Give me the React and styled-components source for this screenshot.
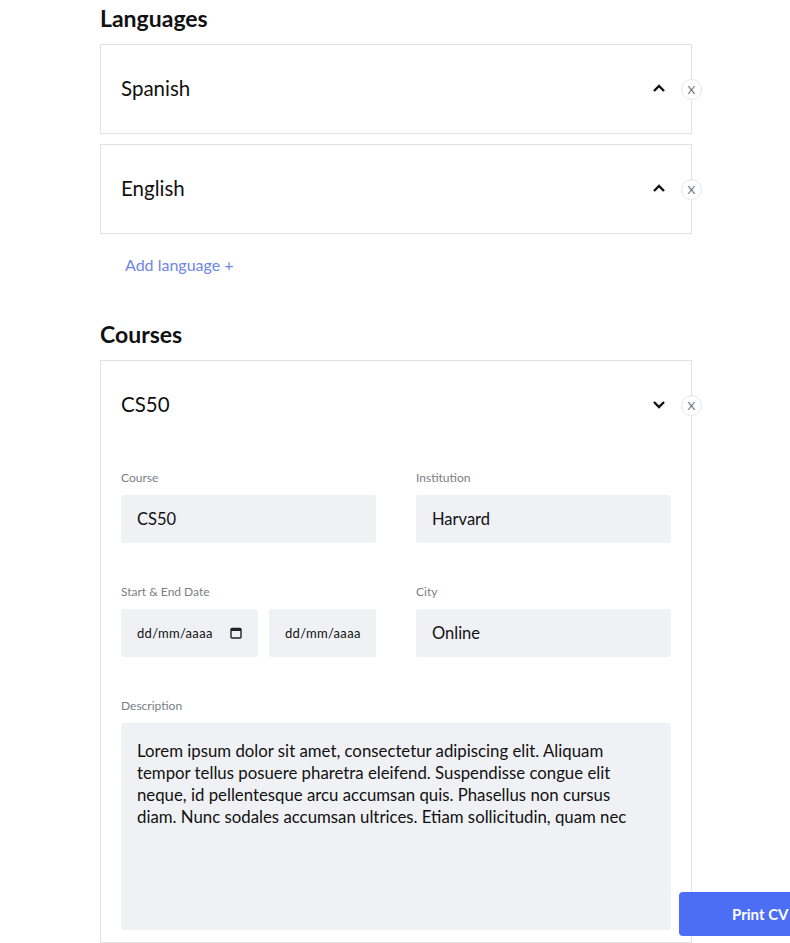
import React from 'react'
import styled, { createGlobalStyle } from 'styled-components'

const GlobalStyle = createGlobalStyle`
  * { box-sizing: border-box; }
  body {
    margin: 0;
    background: #ffffff;
    font-family: Lato, "Open Sans", sans-serif;
    color: #111111;
  }
`

const Page = styled.div`
  width: 592px;
  margin-left: 100px;
  padding-top: 4px;
`

const Section = styled.section`
  margin-bottom: 45px;
`

const Heading = styled.h2`
  margin: 0 0 11px;
  font-size: 23px;
  line-height: 29px;
  font-weight: 700;
`

const CardList = styled.div`
  display: flex;
  flex-direction: column;
  gap: 10px;
`

const Card = styled.div`
  position: relative;
  border: 1px solid #e2e2e2;
  background: #fff;
`

const CardHeader = styled.div`
  height: 88px;
  display: flex;
  align-items: center;
  justify-content: space-between;
  padding: 0 25px 2px 20px;
  font-size: 20.5px;
`

const Chevron = styled.svg`
  width: 14px;
  height: 14px;
`

const RemoveButton = styled.button`
  position: absolute;
  right: -11px;
  top: 34px;
  width: 21px;
  height: 21px;
  border-radius: 50%;
  border: 1px solid #e6e6e6;
  background: #fff;
  color: #6a6f80;
  font-family: Lato, sans-serif;
  font-size: 12px;
  line-height: 1;
  padding: 0;
  display: flex;
  align-items: center;
  justify-content: center;
`

const AddLink = styled.div`
  margin: 21px 0 0 25px;
  color: #6e86e6;
  font-size: 16px;
  line-height: 20px;
`

const Form = styled.div`
  display: grid;
  grid-template-columns: 255px 255px;
  column-gap: 40px;
  row-gap: 41px;
  padding: 21px 20px 12px 20px;
`

const Field = styled.div`
  display: flex;
  flex-direction: column;
  gap: 9px;
  grid-column: ${p => (p.$wide ? '1 / -1' : 'auto')};
  min-width: 0;
`

const Label = styled.label`
  font-size: 12px;
  line-height: 16px;
  color: #7b7e86;
`

const Input = styled.div`
  height: 48px;
  background: #f0f1f5;
  border-radius: 3px;
  padding: 0 16px;
  display: flex;
  align-items: center;
  font-size: 16.5px;
`

const DateRow = styled.div`
  display: flex;
  gap: 11px;
  overflow: hidden;
`

const DateInput = styled(Input)`
  flex: 0 0 137px;
  justify-content: space-between;
  font-size: 13px;
  letter-spacing: 0.3px;
`

const TextArea = styled.div`
  height: 207px;
  background: #f0f1f5;
  border-radius: 3px;
  padding: 17px 40px 15px 16px;
  font-size: 16.8px;
  line-height: 22px;
`

const PrintButton = styled.button`
  position: fixed;
  left: 679px;
  bottom: 7px;
  width: 160px;
  height: 44px;
  border: none;
  border-radius: 4px;
  background: #4c6ef5;
  color: #fff;
  font-family: Lato, sans-serif;
  font-weight: 700;
  font-size: 15px;
  padding: 0 0 0 6px;
  text-align: left;
  text-indent: 47px;
`

function ChevronIcon({ up }) {
  return (
    <Chevron viewBox="0 0 14 14">
      <path
        d={up ? 'M2 10 L7 5 L12 10' : 'M2 5 L7 10 L12 5'}
        fill="none"
        stroke="#111"
        strokeWidth="2.4"
      />
    </Chevron>
  )
}

function CalendarIcon() {
  return (
    <svg width="12" height="12" viewBox="0 0 12 12">
      <rect x="1" y="1.5" width="10" height="9.5" rx="1" fill="none" stroke="#222" strokeWidth="1.4" />
      <rect x="1" y="1.5" width="10" height="2.5" fill="#222" />
    </svg>
  )
}

function CollapsedCard({ title }) {
  return (
    <Card>
      <CardHeader>
        {title}
        <ChevronIcon up />
      </CardHeader>
      <RemoveButton>X</RemoveButton>
    </Card>
  )
}

export default function App() {
  return (
    <>
      <GlobalStyle />
      <Page>
        <Section>
          <Heading>Languages</Heading>
          <CardList>
            <CollapsedCard title="Spanish" />
            <CollapsedCard title="English" />
          </CardList>
          <AddLink>Add language +</AddLink>
        </Section>

        <Section>
          <Heading>Courses</Heading>
          <Card>
            <CardHeader>
              CS50
              <ChevronIcon />
            </CardHeader>
            <RemoveButton>X</RemoveButton>
            <Form>
              <Field>
                <Label>Course</Label>
                <Input>CS50</Input>
              </Field>
              <Field>
                <Label>Institution</Label>
                <Input>Harvard</Input>
              </Field>
              <Field>
                <Label>Start &amp; End Date</Label>
                <DateRow>
                  <DateInput>
                    dd/mm/aaaa
                    <CalendarIcon />
                  </DateInput>
                  <DateInput>
                    dd/mm/aaaa
                    <CalendarIcon />
                  </DateInput>
                </DateRow>
              </Field>
              <Field>
                <Label>City</Label>
                <Input>Online</Input>
              </Field>
              <Field $wide>
                <Label>Description</Label>
                <TextArea>
                  Lorem ipsum dolor sit amet, consectetur adipiscing elit. Aliquam tempor tellus posuere
                  pharetra eleifend. Suspendisse congue elit neque, id pellentesque arcu accumsan quis.
                  Phasellus non cursus diam. Nunc sodales accumsan ultrices. Etiam sollicitudin, quam nec
                </TextArea>
              </Field>
            </Form>
          </Card>
        </Section>
      </Page>
      <PrintButton>Print CV</PrintButton>
    </>
  )
}
